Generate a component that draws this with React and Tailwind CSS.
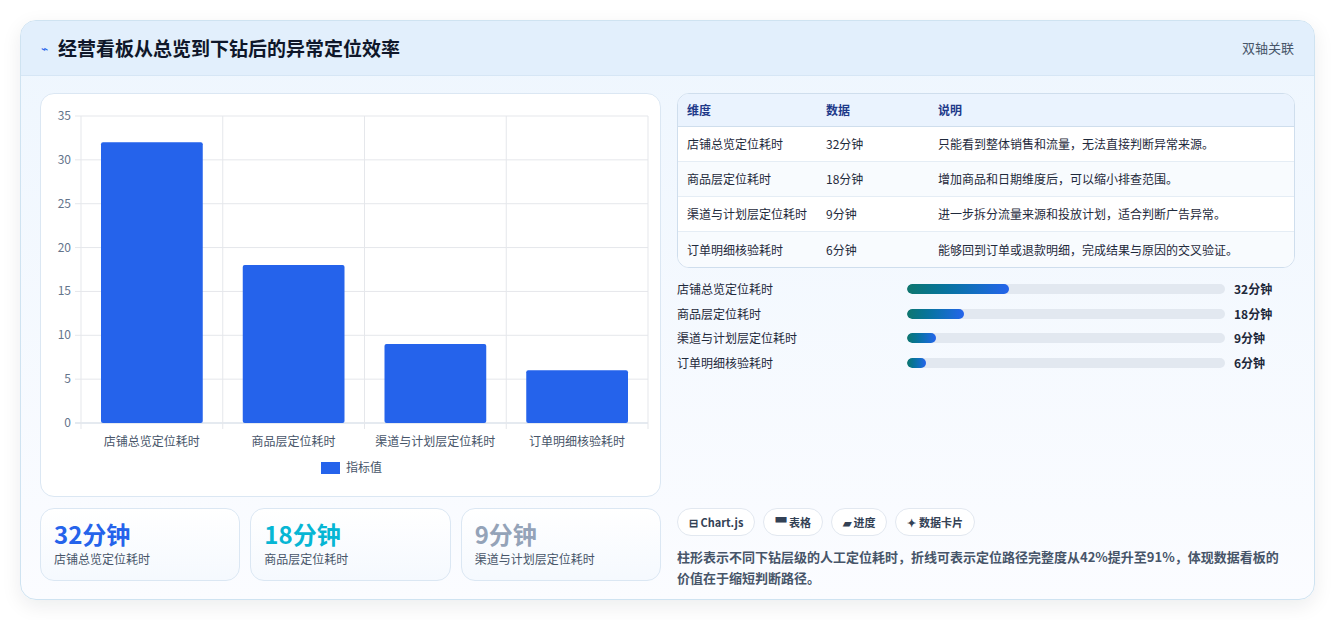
import React from "react";

const F = { fontFamily: '"Noto Sans CJK SC", "Noto Sans", sans-serif' };
const cats = ["店铺总览定位耗时", "商品层定位耗时", "渠道与计划层定位耗时", "订单明细核验耗时"];
const vals = [32, 18, 9, 6];
const rows = [
  ["店铺总览定位耗时", "32分钟", "只能看到整体销售和流量，无法直接判断异常来源。"],
  ["商品层定位耗时", "18分钟", "增加商品和日期维度后，可以缩小排查范围。"],
  ["渠道与计划层定位耗时", "9分钟", "进一步拆分流量来源和投放计划，适合判断广告异常。"],
  ["订单明细核验耗时", "6分钟", "能够回到订单或退款明细，完成结果与原因的交叉验证。"],
];

function Chart() {
  const x0 = 40, x1 = 607, yTop = 22, yBot = 329;
  const u = (yBot - yTop) / 35;
  const cw = (x1 - x0) / 4;
  return (
    <svg width="620" height="403" className="block">
      {[0, 5, 10, 15, 20, 25, 30, 35].map((v) => {
        const y = yBot - v * u;
        return (
          <g key={v}>
            <line x1={x0 - 6} x2={x1} y1={y} y2={y} stroke={v === 0 ? "#cbd5e1" : "#e5e7eb"} />
            <text x={x0 - 10} y={y + 4} textAnchor="end" fontSize="12" fill="#64748b" style={F}>{v}</text>
          </g>
        );
      })}
      {[0, 1, 2, 3, 4].map((i) => (
        <line key={i} x1={x0 + i * cw} x2={x0 + i * cw} y1={yTop} y2={yBot + 6} stroke="#e5e7eb" />
      ))}
      {vals.map((v, i) => {
        const h = v * u;
        const bx = x0 + i * cw + 20;
        return <rect key={i} x={bx} y={yBot - h} width={cw - 40} height={h} rx="2" fill="#2563eb" />;
      })}
      {cats.map((c, i) => (
        <text key={c} x={x0 + i * cw + cw / 2} y={352} textAnchor="middle" fontSize="12" fill="#475569" style={F}>{c}</text>
      ))}
      <rect x="280" y="368" width="19" height="12" fill="#2563eb" />
      <text x="305" y="378" fontSize="12" fill="#475569" style={F}>指标值</text>
    </svg>
  );
}

export default function App() {
  return (
    <div className="w-[1336px] h-[620px] bg-white p-[20px] pr-[21px]" style={F}>
      <div className="h-[580px] rounded-[16px] border border-[#cfe3f1] shadow-[0_6px_20px_rgba(15,23,42,0.08)] overflow-hidden bg-gradient-to-b from-[#eef6fe] to-[#fbfcff]">
        <div className="h-[55px] bg-[#e2effc] border-b border-[#d6e6f5] flex items-center justify-between px-[20px]">
          <div className="flex items-center gap-[10px]">
            <span className="text-[#2563eb] text-[12px]">⌁</span>
            <span className="text-[19px] font-bold text-[#0f172a]">经营看板从总览到下钻后的异常定位效率</span>
          </div>
          <span className="text-[13px] text-[#475569]">双轴关联</span>
        </div>
        <div className="flex gap-[16px] px-[19px] pt-[17px]">
          <div className="w-[621px] flex flex-col gap-[11px]">
            <div className="h-[404px] bg-white rounded-[14px] border border-[#dbe7f3]">
              <Chart />
            </div>
            <div className="grid grid-cols-3 gap-[10px]">
              {[["32分钟", "text-[#2563eb]", cats[0]], ["18分钟", "text-[#06b6d4]", cats[1]], ["9分钟", "text-[#94a3b8]", cats[2]]].map(([v, c, l]) => (
                <div key={v} className="h-[73px] rounded-[14px] border border-[#dbe7f3] bg-gradient-to-b from-white to-[#f5f9fe] px-[13px] pt-[9px]">
                  <div className={`text-[24px] font-bold leading-[32px] ${c}`}>{v}</div>
                  <div className="text-[12px] text-[#475569] leading-[18px]">{l}</div>
                </div>
              ))}
            </div>
          </div>
          <div className="w-[621px] flex flex-col">
            <div className="rounded-[12px] border border-[#cfdeed] overflow-hidden bg-white">
              <div className="h-[33px] bg-[#eaf3fe] border-b border-[#cfdeed] flex items-center text-[12px] font-bold text-[#1e3a8a]">
                <span className="w-[148px] pl-[9px]">维度</span>
                <span className="w-[112px]">数据</span>
                <span>说明</span>
              </div>
              {rows.map((r, i) => (
                <div key={i} className={`h-[35px] flex items-center text-[12px] text-[#1e293b] ${i < 3 ? "border-b border-[#e5edf5]" : ""} ${i % 2 ? "bg-[#f8fbfe]" : "bg-white"}`}>
                  <span className="w-[148px] pl-[9px]">{r[0]}</span>
                  <span className="w-[112px]">{r[1]}</span>
                  <span>{r[2]}</span>
                </div>
              ))}
            </div>
            <div className="mt-[9px] flex flex-col">
              {vals.map((v, i) => (
                <div key={i} className="h-[24.5px] flex items-center text-[12px] text-[#1e293b]">
                  <span className="w-[230px]">{cats[i]}</span>
                  <div className="w-[318px] h-[10px] rounded-full bg-[#e2e8f0] overflow-hidden">
                    <div className="h-full rounded-full bg-gradient-to-r from-[#0f766e] to-[#2563eb]" style={{ width: `${v}%` }} />
                  </div>
                  <span className="ml-[9px] font-bold">{v}分钟</span>
                </div>
              ))}
            </div>
            <div className="mt-[133px] flex gap-[8px]">
              {["⊟ Chart.js", "▀ 表格", "▰ 进度", "✦ 数据卡片"].map((t) => (
                <span key={t} className="h-[28px] px-[11px] rounded-full border border-[#e2e8f0] bg-white text-[11px] font-bold text-[#334155] flex items-center">{t}</span>
              ))}
            </div>
            <p className="mt-[10px] text-[13px] leading-[21px] font-bold text-[#475569] pr-[8px]">
              柱形表示不同下钻层级的人工定位耗时，折线可表示定位路径完整度从42%提升至91%，体现数据看板的价值在于缩短判断路径。
            </p>
          </div>
        </div>
      </div>
    </div>
  );
}
